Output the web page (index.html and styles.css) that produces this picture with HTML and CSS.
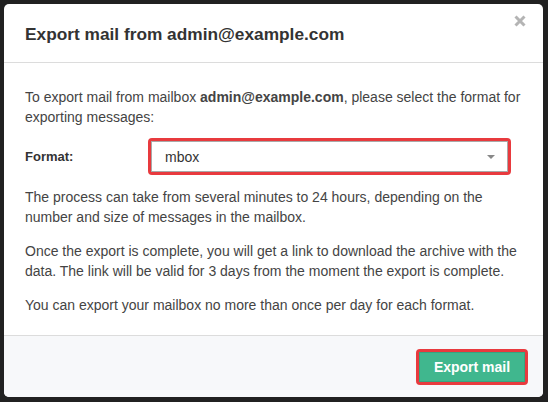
FILE: index.html
```html
<!DOCTYPE html>
<html lang="en">
<head>
<meta charset="utf-8">
<title>Export mail</title>
<link rel="stylesheet" href="styles.css">
</head>
<body>
<div class="backdrop">
  <div class="modal">
    <div class="modal-header">
      <h4 class="modal-title">Export mail from admin@example.com</h4>
      <svg class="close" width="12" height="12" viewBox="0 0 12 12"><path d="M1.5 1.5 L10.5 10.5 M10.5 1.5 L1.5 10.5" stroke="#b4b4b4" stroke-width="3" stroke-linecap="butt"/></svg>
    </div>
    <div class="modal-body">
      <p class="intro">To export mail from mailbox <b>admin@example.com</b>, please select the format for exporting messages:</p>
      <div class="form-row">
        <label class="label">Format:</label>
        <div class="highlight">
          <div class="select">
            <span>mbox</span>
            <span class="caret"></span>
          </div>
        </div>
      </div>
      <p>The process can take from several minutes to 24 hours, depending on the number and size of messages in the mailbox.</p>
      <p>Once the export is complete, you will get a link to download the archive with the data. The link will be valid for 3 days from the moment the export is complete.</p>
      <p class="last">You can export your mailbox no more than once per day for each format.</p>
    </div>
    <div class="modal-footer">
      <div class="btn-highlight"><button class="btn">Export mail</button></div>
    </div>
  </div>
</div>
</body>
</html>
```

FILE: styles.css
```css
* { box-sizing: border-box; }
html, body { margin: 0; padding: 0; }
body {
  background: #212121;
  font-family: "Liberation Sans", Arial, sans-serif;
  font-size: 14px;
  line-height: 20px;
  color: #333;
  width: 548px;
  height: 402px;
  overflow: hidden;
}
.backdrop {
  padding: 4px 5px 5px 4px;
}
.modal {
  background: #fff;
  border-radius: 5px;
  width: 539px;
  height: 393px;
  display: flex;
  flex-direction: column;
  overflow: hidden;
}
.modal-header {
  height: 59px;
  border-bottom: 1px solid #dcdcdc;
  display: flex;
  align-items: center;
  justify-content: space-between;
  padding: 0 14px 0 21px;
  position: relative;
}
.modal-title {
  margin: 0;
  font-size: 17.3px;
  font-weight: bold;
  color: #333;
  line-height: 24px;
  padding-top: 1px;
}
.close {
  position: absolute;
  right: 17px;
  top: 11px;
}
.modal-body {
  flex: 1;
  padding: 24px 21px 0 21px;
}
.modal-body p {
  margin: 0 0 14px 0;
  color: #444;
}
.modal-body p.intro { margin-bottom: 11px; }
.modal-body p.last { margin-bottom: 0; }
.form-row {
  display: flex;
  align-items: center;
  margin-bottom: 12px;
}
.label {
  width: 123px;
  font-weight: bold;
  font-size: 13px;
  color: #333;
}
.highlight {
  width: 363px;
  border: 3px solid #e83a3e;
  border-radius: 4px;
}
.select {
  height: 31px;
  border: 1px solid #a9a9a9;
  display: flex;
  align-items: center;
  justify-content: space-between;
  padding: 0 12px 0 13px;
  color: #333;
}
.caret {
  width: 0;
  height: 0;
  border-left: 4px solid transparent;
  border-right: 4px solid transparent;
  border-top: 4px solid #888;
}
.modal-footer {
  height: 62px;
  border-top: 1px solid #dcdcdc;
  background: #f7f8fa;
  display: flex;
  align-items: center;
  justify-content: flex-end;
  padding: 0 15px 0 0;
}
.btn-highlight {
  border: 3px solid #e83a3e;
  border-radius: 4px;
  margin-top: 1px;
}
.btn {
  display: block;
  border: 1px solid #38a47f;
  background: #40b78e;
  color: #fff;
  font-family: "Liberation Sans", Arial, sans-serif;
  font-weight: bold;
  font-size: 14px;
  line-height: 20px;
  height: 30px;
  width: 106px;
  padding: 0;
}
```
